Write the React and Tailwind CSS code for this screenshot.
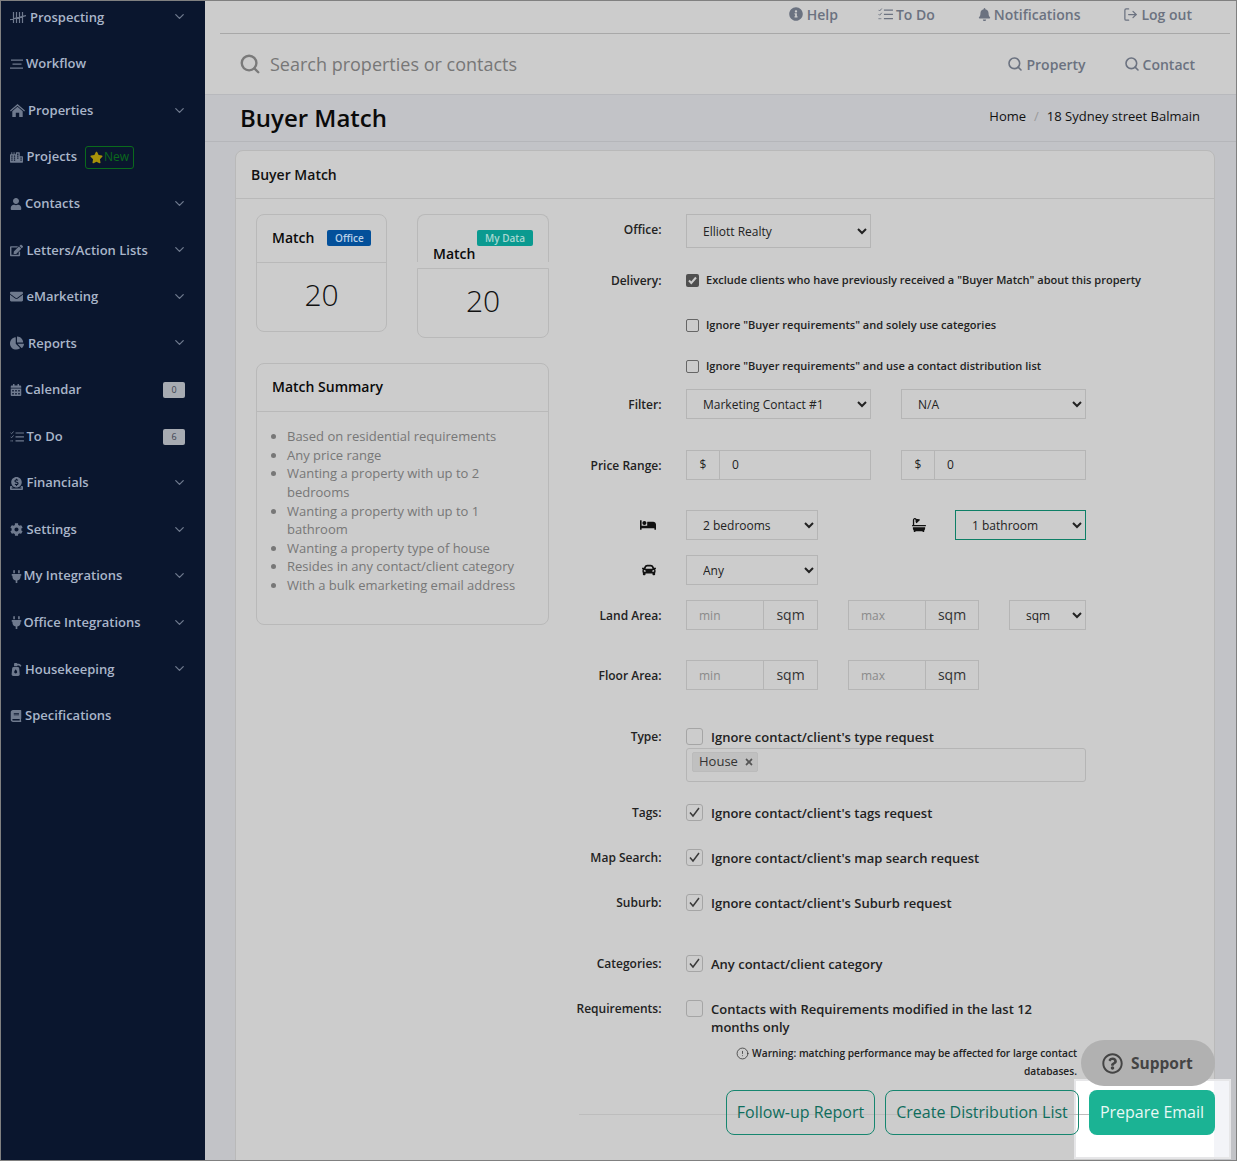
import React from "react";
import { ChevronDown, Search, LogOut, CircleAlert } from "lucide-react";
import {
  FaCity, FaUser, FaEdit, FaEnvelope, FaChartPie, FaCalendarAlt, FaDonate, FaCog, FaPlug,
  FaPumpSoap, FaBook, FaStar, FaInfoCircle, FaBell, FaBed, FaBath, FaCar, FaRegQuestionCircle, FaTimes,
} from "react-icons/fa";

const font = { fontFamily: '"Open Sans", sans-serif' };

function Tally({ size = 16 }) {
  return (
    <svg width={size} height={size * 0.7} viewBox="0 0 16 11" fill="none" stroke="currentColor" strokeWidth="1.2">
      <path d="M3.5 0v11M6.5 0v11M9.5 0v11M12.5 0v11M0 7.5L16 3.5" />
    </svg>
  );
}
function House() {
  return (
    <svg width="15" height="13" viewBox="0 0 15 13" fill="currentColor">
      <path d="M7.5 0L15 6.6l-.8.9L7.5 1.7.8 7.5 0 6.6z" />
      <path d="M7.5 2.8l5.2 4.4V13H9.2V8.8H5.8V13H2.3V7.2z" />
    </svg>
  );
}
function Lines({ size = 13 }) {
  return (
    <svg width={size} height={size * 0.8} viewBox="0 0 13 10" fill="none" stroke="currentColor" strokeWidth="1.3">
      <path d="M1 1h12M2.5 5h9M0 9h13" />
    </svg>
  );
}
function Tasks({ size = 14 }) {
  return (
    <svg width={size} height={size * 0.85} viewBox="0 0 14 12" fill="none" stroke="currentColor" strokeWidth="1.2">
      <path d="M5.5 2h8.5M5.5 6h8.5M5.5 10h8.5" />
      <path d="M0.5 1.8l1 1 2-2.3M0.5 5.8l1 1 2-2.3" strokeWidth="0.9" />
      <path d="M0.5 10h2.5" strokeWidth="1.4" strokeDasharray="1 .7" />
    </svg>
  );
}

const nav = [
  { label: "Prospecting", icon: <Tally />, w: "w-[20px]", chev: true },
  { label: "Workflow", icon: <Lines />, w: "w-[16px]" },
  { label: "Properties", icon: <House />, w: "w-[18px]", chev: true },
  { label: "Projects", icon: <FaCity size={13} />, w: "w-[16.5px]", isNew: true },
  { label: "Contacts", icon: <FaUser size={12} />, w: "w-[15px]", chev: true },
  { label: "Letters/Action Lists", icon: <FaEdit size={13} />, w: "w-[16.5px]", chev: true },
  { label: "eMarketing", icon: <FaEnvelope size={13} />, w: "w-[16.5px]", chev: true },
  { label: "Reports", icon: <FaChartPie size={14} />, w: "w-[18px]", chev: true },
  { label: "Calendar", icon: <FaCalendarAlt size={12} />, w: "w-[15px]", badge: "0" },
  { label: "To Do", icon: <Tasks />, w: "w-[16.5px]", badge: "6" },
  { label: "Financials", icon: <FaDonate size={13} />, w: "w-[16.5px]", chev: true },
  { label: "Settings", icon: <FaCog size={13} />, w: "w-[16.5px]", chev: true },
  { label: "My Integrations", icon: <FaPlug size={13} />, w: "w-[13.5px]", chev: true },
  { label: "Office Integrations", icon: <FaPlug size={13} />, w: "w-[13.5px]", chev: true },
  { label: "Housekeeping", icon: <FaPumpSoap size={13} />, w: "w-[15px]", chev: true },
  { label: "Specifications", icon: <FaBook size={12} />, w: "w-[15px]" },
];

function Sidebar() {
  return (
    <aside className="w-[204px] shrink-0 bg-[#0a162e] pl-[9px] pr-[19px] h-[1170px]">
      <div className="-mt-[6.8px]">
        {nav.map((n) => (
          <div key={n.label} className="h-[46.57px] flex items-center text-[13px] font-semibold text-[#a9b5c9]">
            <span className={`${n.w} shrink-0 flex items-center text-[#6f7a8e]`}>{n.icon}</span>
            <span>{n.label}</span>
            {n.isNew && (
              <span className="ml-2 h-[23px] w-[49px] border border-[#0a6a1c] rounded-[3px] flex items-center justify-center text-[12px] font-normal text-[#0a6a1c]">
                <FaStar size={13} className="text-[#a8920a] mr-px" />New
              </span>
            )}
            {n.chev && <ChevronDown size={15} strokeWidth={2} className="ml-auto -mr-px -mt-px text-[#6f7a8e]" />}
            {n.badge && (
              <span className="ml-auto mr-px w-[22px] h-[16px] rounded-[2px] bg-[#a7abb2] text-[#3c4350] text-[9px] font-normal flex items-center justify-center">
                {n.badge}
              </span>
            )}
          </div>
        ))}
      </div>
    </aside>
  );
}

function TopLink({ icon, children, className = "", gap = "gap-[3px]" }) {
  return (
    <span className={`flex items-center ${gap} text-[14px] font-semibold text-[#6b7280] ${className}`}>
      {icon}
      <span>{children}</span>
    </span>
  );
}

function Header() {
  return (
    <header className="h-[94px] bg-[#cccccc] border-b border-[#b8b9bd]">
      <div className="h-[33px] ml-[15px] mr-[6px] border-b border-[#a8a8a8] flex justify-end items-center pr-[38px] pb-[6px]">
        <TopLink gap="gap-[4px]" icon={<FaInfoCircle size={14} />}>Help</TopLink>
        <TopLink className="ml-[40px]" icon={<Tasks size={15} />}>To Do</TopLink>
        <TopLink className="ml-[43px]" icon={<FaBell size={13} />}>Notifications</TopLink>
        <TopLink className="ml-[43px]" icon={<LogOut size={15} strokeWidth={2} />}>Log out</TopLink>
      </div>
      <div className="h-[60px] flex items-center pl-[34px] pr-[41px]">
        <Search size={22} strokeWidth={2.6} className="text-[#7a7a7a]" />
        <span className="ml-[9px] text-[18px] text-[#777777]">Search properties or contacts</span>
        <TopLink className="ml-auto" icon={<Search size={16} strokeWidth={2.4} />}>Property</TopLink>
        <TopLink className="ml-[38px]" icon={<Search size={16} strokeWidth={2.4} />}>Contact</TopLink>
      </div>
    </header>
  );
}

function TitleBand() {
  return (
    <div className="h-[47px] bg-[#c2c3c7] border-b border-[#b5b6ba] flex items-center pl-[35px] pr-[36px]">
      <h1 className="text-[24px] leading-[48px] font-semibold text-[#0a0a0a] -mt-px">Buyer Match</h1>
      <div className="ml-auto text-[13px] text-[#111111] -mt-[3px] flex">
        <span>Home</span>
        <span className="text-[#9a9a9a] mx-[8px]">/</span>
        <span>18 Sydney street Balmain</span>
      </div>
    </div>
  );
}

function MatchCards() {
  return (
    <div className="flex items-start gap-[30px]">
      <div className="w-[131px] h-[118px] border border-[#b9b9b9] rounded-[8px]">
        <div className="h-[48px] border-b border-[#b9b9b9] flex items-center pl-[15px] pb-[2px]">
          <span className="text-[14px] font-semibold text-[#0a0a0a]">Match</span>
          <span className="ml-[13px] w-[44px] h-[16px] pt-px rounded-[2px] bg-[#03509a] text-[#b9d0e8] text-[10px] font-semibold flex items-center justify-center">Office</span>
        </div>
        <div className="h-[68px] flex items-center justify-center text-[30px] font-light text-[#111111] pb-[6px]">20</div>
      </div>
      <div className="w-[132px]">
        <div className="h-[48px] relative border-x border-t border-[#b9b9b9] rounded-t-[8px]">
          <span className="absolute right-[15px] top-[15px] w-[56px] h-[16px] rounded-[2px] bg-[#0a9a90] text-[#a8d8d2] text-[10px] font-semibold flex items-center justify-center">My Data</span>
          <div className="absolute left-[15px] top-[29px] text-[14px] font-semibold text-[#0a0a0a] leading-[19px]">Match</div>
        </div>
        <div className="mt-[6px] h-[70px] border border-[#b9b9b9] rounded-b-[8px] flex items-center justify-center text-[30px] font-light text-[#111111] pb-[5px]">20</div>
      </div>
    </div>
  );
}

const summary = [
  "Based on residential requirements",
  "Any price range",
  "Wanting a property with up to 2 bedrooms",
  "Wanting a property with up to 1 bathroom",
  "Wanting a property type of house",
  "Resides in any contact/client category",
  "With a bulk emarketing email address",
];

function Summary() {
  return (
    <div className="mt-[25px] h-[262px] border border-[#b9b9b9] rounded-[8px]">
      <div className="h-[48px] border-b border-[#b9b9b9] flex items-center pl-[15px] pb-[2px] text-[14px] font-semibold text-[#0a0a0a]">Match Summary</div>
      <ul className="list-disc pl-[30px] pr-[20px] pt-[15.3px] text-[13px] leading-[18.6px] text-[#777777] marker:text-[#777777]">
        {summary.map((s) => <li key={s}>{s}</li>)}
      </ul>
    </div>
  );
}

function Label({ children, className = "" }) {
  return <div className={`w-[91.5px] shrink-0 mr-[24.5px] text-right text-[12px] leading-[18px] font-semibold text-[#222222] ${className}`}>{children}</div>;
}

function Row({ label, className = "", labelClass = "", children, center = false }) {
  return (
    <div className={`flex ${center ? "items-center" : "items-start"} ${className}`}>
      <Label className={labelClass}>{label}</Label>
      {children}
    </div>
  );
}

function Select({ value, className = "" }) {
  return (
    <select defaultValue={value} className={`block border border-[#b5b5b5] bg-transparent text-[12px] text-[#222222] pl-[12px] ${className}`}>
      <option>{value}</option>
    </select>
  );
}

function SmallCheck({ checked, children }) {
  return (
    <div className="flex items-center h-[20px]">
      {checked ? (
        <span className="w-[13px] h-[13px] rounded-[2px] bg-[#4f4f4f] flex items-center justify-center">
          <svg width="9" height="9" viewBox="0 0 9 9" fill="none" stroke="#cccccc" strokeWidth="2"><path d="M1 4.5l2.3 2.5L8 1.5" /></svg>
        </span>
      ) : (
        <span className="w-[13px] h-[13px] rounded-[2px] border border-[#666666]" />
      )}
      <span className="ml-[7px] text-[11.05px] font-semibold text-[#222222]">{children}</span>
    </div>
  );
}

function BigCheck({ checked, children, className = "" }) {
  return (
    <div className={`flex items-start ${className}`}>
      <span className="w-[17px] h-[17px] shrink-0 rounded-[3px] border border-[#a5a5a5] flex items-center justify-center">
        {checked && <svg width="11" height="11" viewBox="0 0 11 11" fill="none" stroke="#3a3a3a" strokeWidth="1.5"><path d="M1 5.5l3 3.5L10 1" /></svg>}
      </span>
      <span className="ml-[8px] text-[13px] leading-[18px] font-semibold text-[#222222]">{children}</span>
    </div>
  );
}

function Money() {
  return (
    <div className="w-[185px] h-[30px] border border-[#b5b5b5] flex text-[12px] text-[#222222]">
      <span className="w-[33px] border-r border-[#b5b5b5] flex items-center justify-center">$</span>
      <span className="pl-[12px] flex items-center">0</span>
    </div>
  );
}

function Area({ hint, className = "", unit = "w-[53px]" }) {
  return (
    <div className={`h-[30px] border border-[#b5b5b5] flex ${className}`}>
      <span className="flex-1 pl-[12px] pt-[2px] flex items-center text-[12px] text-[#8a8a8a] border-r border-[#b5b5b5]">{hint}</span>
      <span className={`${unit} flex items-center justify-center text-[14px] text-[#333333] pb-[2px]`}>sqm</span>
    </div>
  );
}

function Form() {
  return (
    <div className="flex-1 ml-[21px]">
      <Row label="Office:" center labelClass="pb-[3px]"><Select value="Elliott Realty" className="w-[185px] h-[34px]" /></Row>
      <Row label="Delivery:" center className="mt-[22px]" labelClass="pt-[2px]"><SmallCheck checked>Exclude clients who have previously received a "Buyer Match" about this property</SmallCheck></Row>
      <Row label="" className="mt-[25px]"><SmallCheck>Ignore "Buyer requirements" and solely use categories</SmallCheck></Row>
      <Row label="" className="mt-[21px]"><SmallCheck>Ignore "Buyer requirements" and use a contact distribution list</SmallCheck></Row>
      <Row label="Filter:" className="mt-[13px]" center labelClass="pt-[2px]">
        <Select value="Marketing Contact #1" className="w-[185px] h-[30px]" />
        <Select value="N/A" className="w-[185px] h-[30px] ml-[30px]" />
      </Row>
      <Row label="Price Range:" className="mt-[31px]" center labelClass="pt-[2px]">
        <Money />
        <div className="ml-[30px]"><Money /></div>
      </Row>
      <Row label={<span className="flex justify-end pr-[6px] text-[#111111]"><FaBed size={16} /></span>} className="mt-[30px]" center>
        <Select value="2 bedrooms" className="w-[132px] h-[30px]" />
        <FaBath size={14} className="ml-[94px] text-[#111111]" />
        <Select value="1 bathroom" className="w-[131px] h-[30px] ml-[29px] !border-[#0d7f66]" />
      </Row>
      <Row label={<span className="flex justify-end pr-[6px] text-[#111111]"><FaCar size={14} /></span>} className="mt-[15px]" center>
        <Select value="Any" className="w-[132px] h-[30px]" />
      </Row>
      <Row label="Land Area:" className="mt-[15px]" center labelClass="pt-[2px]">
        <Area hint="min" className="w-[132px]" />
        <Area hint="max" unit="w-[52px]" className="w-[131px] ml-[30px]" />
        <Select value="sqm" className="w-[77px] h-[30px] ml-[30px]" />
      </Row>
      <Row label="Floor Area:" className="mt-[30px]" center labelClass="pt-[2px]">
        <Area hint="min" className="w-[132px]" />
        <Area hint="max" unit="w-[52px]" className="w-[131px] ml-[30px]" />
      </Row>
      <Row label="Type:" className="mt-[38px]">
        <div className="w-[400px]">
          <BigCheck>Ignore contact/client's type request</BigCheck>
          <div className="mt-[2px] h-[34px] border border-[#b5b5b5] rounded-[3px] pl-[5px] pt-[3px]">
            <span className="flex items-center h-[20px] w-[66px] bg-[#c0c0c0] border border-[#bbbbbb] rounded-[2px] pl-[6px] text-[13px] text-[#333333]">
              House<FaTimes size={10} className="ml-[6px] text-[#555555]" />
            </span>
          </div>
        </div>
      </Row>
      <Row label="Tags:" className="mt-[22px]"><BigCheck checked>Ignore contact/client's tags request</BigCheck></Row>
      <Row label="Map Search:" className="mt-[27px]"><BigCheck checked>Ignore contact/client's map search request</BigCheck></Row>
      <Row label="Suburb:" className="mt-[27px]"><BigCheck checked>Ignore contact/client's Suburb request</BigCheck></Row>
      <Row label="Categories:" className="mt-[43px]"><BigCheck checked>Any contact/client category</BigCheck></Row>
      <Row label="Requirements:" className="mt-[27px]"><BigCheck className="w-[365px]">Contacts with Requirements modified in the last 12 months only</BigCheck></Row>
      <div className="mt-[8px] w-[507px] text-right text-[10.2px] leading-[18px] font-semibold text-[#222222] pl-[150px]">
        <CircleAlert size={13} strokeWidth={1.3} className="inline mr-[3px] -mt-[2px]" />
        Warning: matching performance may be affected for large contact databases.
      </div>
      <div className="mt-[10px] -mr-px relative flex items-center justify-end gap-[10px] h-[45px]">
        <div className="absolute left-[9px] right-0 top-[24px] h-px bg-[#bdbdbd] z-20" />
        <button className="relative z-20 h-[45px] w-[149px] pb-[2px] border border-[#16866f] rounded-[8px] text-[16px] text-[#0f6d5c]">Follow-up Report</button>
        <button className="relative z-20 h-[45px] w-[194px] pb-[2px] border border-[#16866f] rounded-[8px] text-[16px] text-[#0f6d5c]">Create Distribution List</button>
        <button className="relative z-20 h-[45px] w-[126px] pb-[2px] bg-[#1bb394] rounded-[8px] text-[16px] font-medium text-[#e8f8f5]">Prepare Email</button>
      </div>
    </div>
  );
}

export default function App() {
  return (
    <div style={font} className="relative w-[1237px] h-[1161px] overflow-hidden border border-[#808080] box-border flex bg-[#c2c3c7]">
      <Sidebar />
      <main className="flex-1 min-w-0">
        <Header />
        <TitleBand />
        <div className="pl-[30px] pr-[21px] pt-[8px]">
          <section className="bg-[#cccccc] border border-[#b9b9b9] rounded-[8px] h-[1100px]">
            <div className="h-[48px] border-b border-[#b9b9b9] flex items-center pl-[15px] text-[14px] font-semibold text-[#111111]">Buyer Match</div>
            <div className="flex pl-[20px] pt-[15px]">
              <div className="w-[293px] shrink-0">
                <MatchCards />
                <Summary />
              </div>
              <Form />
            </div>
          </section>
        </div>
      </main>
      <div className="absolute left-[1073px] top-[1078px] w-[157px] h-[80px] box-border border-2 border-[#e6e6e8] bg-white z-10 flex justify-end">
        <div className="w-[15px] h-full bg-[#f3f4f8]" />
      </div>
      <div className="absolute left-[1080px] top-[1039px] w-[134px] h-[46px] pt-px rounded-[23px] bg-[#b1b1b1] z-30 flex items-center pl-[21px] text-[15.5px] font-bold text-[#444444]">
        <FaRegQuestionCircle size={21} />
        <span className="ml-[8px]">Support</span>
      </div>
    </div>
  );
}
